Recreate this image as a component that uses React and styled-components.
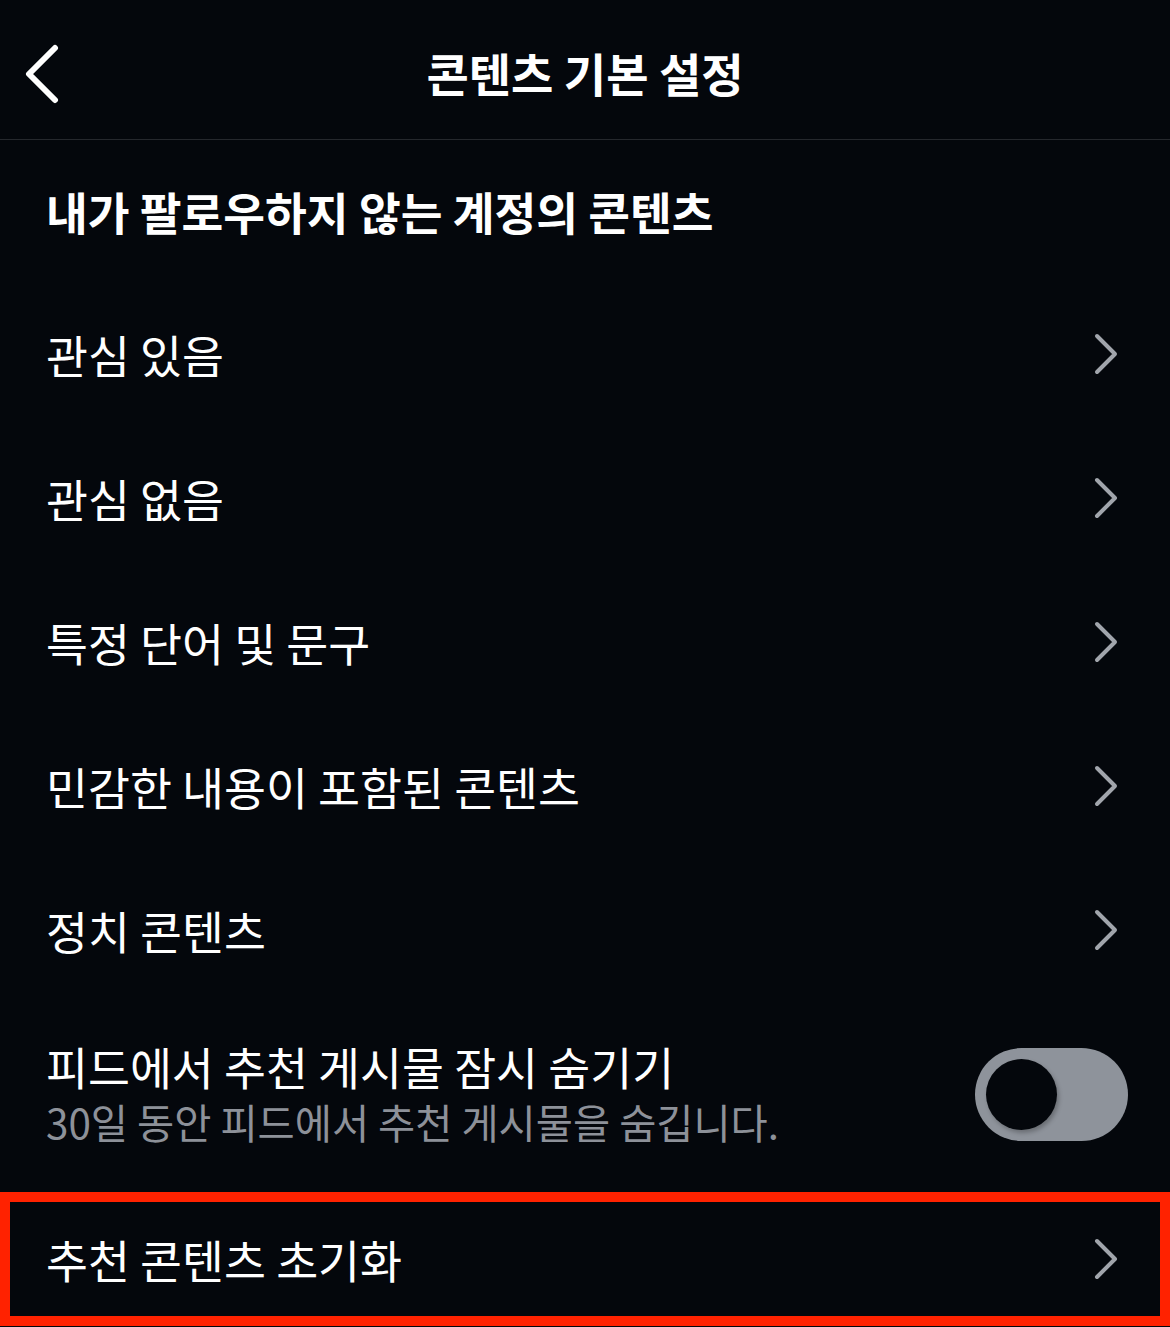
import React, {useState} from 'react';
import styled, {createGlobalStyle} from 'styled-components';

const items = [
  '관심 있음',
  '관심 없음',
  '특정 단어 및 문구',
  '민감한 내용이 포함된 콘텐츠',
  '정치 콘텐츠',
];

const ChevronRight = () => (
  <svg width="26" height="44" viewBox="0 0 26 44" fill="none">
    <path
      d="M4 4 L22 22 L4 40"
      stroke="#a1a5ac"
      strokeWidth="4"
      strokeLinecap="round"
      strokeLinejoin="round"
    />
  </svg>
);

const ChevronLeft = () => (
  <svg width="38" height="60" viewBox="0 0 38 60" fill="none">
    <path
      d="M33 4 L7 30 L33 56"
      stroke="#ffffff"
      strokeWidth="6"
      strokeLinecap="round"
      strokeLinejoin="round"
    />
  </svg>
);

const App = () => {
  const [hideSuggested, setHideSuggested] = useState(false);

  return (
    <>
      <GlobalStyle />
      <Page>
        <Header>
          <BackButton>
            <ChevronLeft />
          </BackButton>
          <Title>콘텐츠 기본 설정</Title>
          <span />
        </Header>

        <SectionTitle>내가 팔로우하지 않는 계정의 콘텐츠</SectionTitle>

        {items.map((label) => (
          <Row key={label}>
            <Label>{label}</Label>
            <ChevronRight />
          </Row>
        ))}

        <ToggleRow>
          <TextBlock>
            <Label>피드에서 추천 게시물 잠시 숨기기</Label>
            <SubLabel>30일 동안 피드에서 추천 게시물을 숨깁니다.</SubLabel>
          </TextBlock>
          <Toggle $on={hideSuggested} onClick={() => setHideSuggested(!hideSuggested)}>
            <Knob />
          </Toggle>
        </ToggleRow>

        <Row $highlighted>
          <Label>추천 콘텐츠 초기화</Label>
          <ChevronRight />
        </Row>
      </Page>
    </>
  );
};

export default App;

const GlobalStyle = createGlobalStyle`
  body {
    margin: 0;
    background: #04070c;
    font-family: 'Noto Sans CJK KR', 'Noto Sans', sans-serif;
  }
`;

const Page = styled.div`
  width: 1170px;
  height: 1327px;
  overflow: hidden;
  background: #04070c;
  color: #fff;
  display: flex;
  flex-direction: column;
`;

const Header = styled.div`
  height: 140px;
  flex-shrink: 0;
  box-sizing: border-box;
  display: grid;
  grid-template-columns: 1fr auto 1fr;
  align-items: center;
  border-bottom: 1px solid #25282d;
`;

const BackButton = styled.div`
  display: flex;
  align-items: center;
  padding-left: 22px;
  padding-top: 8px;
  cursor: pointer;
`;

const Title = styled.div`
  font-size: 46px;
  font-weight: 700;
  line-height: 1;
  padding-top: 4px;
`;

const SectionTitle = styled.div`
  height: 142px;
  flex-shrink: 0;
  display: flex;
  align-items: center;
  padding-left: 46px;
  font-size: 45.4px;
  font-weight: 700;
`;

const Row = styled.div`
  height: ${(p) => (p.$highlighted ? '134px' : '144px')};
  flex-shrink: 0;
  box-sizing: border-box;
  display: flex;
  align-items: center;
  justify-content: space-between;
  padding: 0 ${(p) => (p.$highlighted ? '41px' : '51px')} 0
    ${(p) => (p.$highlighted ? '36px' : '46px')};
  border: ${(p) => (p.$highlighted ? '10px solid #ff2200' : 'none')};
  cursor: pointer;
`;

const Label = styled.div`
  font-size: 45.6px;
  font-weight: 400;
  line-height: 55px;
  color: #fff;
`;

const SubLabel = styled.div`
  font-size: 40.4px;
  font-weight: 400;
  line-height: 55px;
  color: #8d9199;
`;

const ToggleRow = styled.div`
  height: 190px;
  flex-shrink: 0;
  box-sizing: border-box;
  display: flex;
  align-items: center;
  justify-content: space-between;
  padding: 0 42px 6px 46px;
`;

const TextBlock = styled.div`
  display: flex;
  flex-direction: column;
`;

const Toggle = styled.div`
  width: 153px;
  height: 93px;
  border-radius: 47px;
  box-sizing: border-box;
  padding: 0 11px;
  display: flex;
  align-items: center;
  justify-content: ${(p) => (p.$on ? 'flex-end' : 'flex-start')};
  background: ${(p) => (p.$on ? '#3797f0' : '#8e939b')};
  cursor: pointer;
`;

const Knob = styled.div`
  width: 71px;
  height: 71px;
  border-radius: 50%;
  background: #04070c;
  box-shadow: 2px 3px 4px rgba(0, 0, 0, 0.25);
`;
